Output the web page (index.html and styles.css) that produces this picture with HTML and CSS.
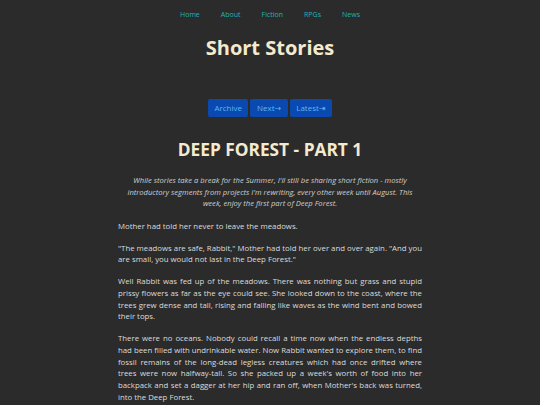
FILE: index.html
```html
<!DOCTYPE html>
<html>
<head>
<meta charset="utf-8">
<link rel="stylesheet" href="styles.css">
</head>
<body>
<nav class="topnav">
  <a href="#">Home</a>
  <a href="#">About</a>
  <a href="#">Fiction</a>
  <a href="#">RPGs</a>
  <a href="#">News</a>
</nav>
<h1 class="site-title">Short Stories</h1>
<div class="pager">
  <a class="btn" href="#">Archive</a>
  <a class="btn" href="#">Next→</a>
  <a class="btn" href="#">Latest⇥</a>
</div>
<main class="story">
  <h2 class="story-title">DEEP FOREST - PART 1</h2>
  <p class="intro">While stories take a break for the Summer, I'll still be sharing short fiction - mostly introductory segments from projects I'm rewriting, every other week until August. This week, enjoy the first part of Deep Forest.</p>
  <p>Mother had told her never to leave the meadows.</p>
  <p>"The meadows are safe, Rabbit," Mother had told her over and over again. "And you are small, you would not last in the Deep Forest."</p>
  <p>Well Rabbit was fed up of the meadows. There was nothing but grass and stupid prissy flowers as far as the eye could see. She looked down to the coast, where the trees grew dense and tall, rising and falling like waves as the wind bent and bowed their tops.</p>
  <p>There were no oceans. Nobody could recall a time now when the endless depths had been filled with undrinkable water. Now Rabbit wanted to explore them, to find fossil remains of the long-dead legless creatures which had once drifted where trees were now halfway-tall. So she packed up a week's worth of food into her backpack and set a dagger at her hip and ran off, when Mother's back was turned, into the Deep Forest.</p>
</main>
</body>
</html>
```
FILE: styles.css
```css
html, body {
  margin: 0;
  padding: 0;
  background: #2b2b2b;
}
body {
  font-family: "Open Sans", "DejaVu Sans", sans-serif;
  color: #dcdcdc;
}
.topnav {
  display: flex;
  justify-content: center;
  gap: 21px;
  padding-top: 10px;
  font-size: 7px;
  line-height: 10px;
}
.topnav a {
  color: #22b3b3;
  text-decoration: none;
}
.site-title {
  margin: 14px 0 0;
  text-align: center;
  font-size: 20px;
  line-height: 28px;
  font-weight: 700;
  color: #f4ead0;
}
.pager {
  display: flex;
  justify-content: center;
  gap: 2px;
  margin-top: 37px;
}
.btn {
  display: block;
  background: #0a49b0;
  color: #5fb6f0;
  font-size: 8px;
  line-height: 18px;
  padding: 0 6.5px;
  border-radius: 2px;
  text-decoration: none;
}
.story {
  width: 304px;
  margin: 0 auto;
}
.story-title {
  margin: 21px 0 0;
  text-align: center;
  font-size: 17.3px;
  line-height: 24px;
  font-weight: 700;
  color: #f4ead0;
}
.story p {
  font-size: 7.8px;
  line-height: 11.7px;
  margin: 10.3px 0 0;
  text-align: justify;
}
.story p.intro {
  font-style: italic;
  text-align: center;
  color: #cfcfcf;
  font-size: 7.6px;
  line-height: 11.5px;
  margin: 13px 4px 0;
}
.story .intro + p {
  margin-top: 11px;
}
```
